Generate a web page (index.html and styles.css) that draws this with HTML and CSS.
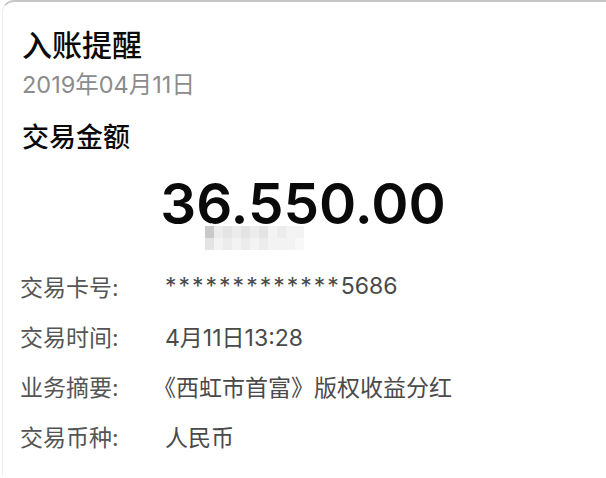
FILE: index.html
```html
<!DOCTYPE html>
<html lang="zh-CN">
<head>
<meta charset="utf-8">
<title>入账提醒</title>
<link rel="stylesheet" href="styles.css">
</head>
<body>
<div class="card">
  <div class="head">
    <div class="title">入账提醒</div>
    <div class="date">2019年04月11日</div>
    <div class="sub">交易金额</div>
  </div>
  <div class="amount-wrap">
    <div class="amount">36.550.00</div>
    <div class="mosaic">
      <span class="m1"></span><span class="m3"></span><span class="m2"></span><span class="m3"></span><span class="m2"></span><span class="m3"></span><span class="m2"></span><span class="m4"></span><span class="m3"></span><span class="m4"></span><span class="m4"></span>
      <span class="m2"></span><span class="m4"></span><span class="m3"></span><span class="m4"></span><span class="m3"></span><span class="m4"></span><span class="m3"></span><span class="m4"></span><span class="m4"></span><span class="m4"></span><span class="m5"></span>
    </div>
  </div>
  <div class="rows">
    <div class="row"><span class="label">交易卡号:</span><span class="value"><span class="stars">*************</span>5686</span></div>
    <div class="row"><span class="label">交易时间:</span><span class="value">4月11日13:28</span></div>
    <div class="row"><span class="label">业务摘要:</span><span class="value quote">《西虹市首富》版权收益分红</span></div>
    <div class="row"><span class="label">交易币种:</span><span class="value">人民币</span></div>
  </div>
</div>
</body>
</html>
```

FILE: styles.css
```css
html, body {
  margin: 0;
  padding: 0;
  background: #ffffff;
}
body {
  width: 606px;
  height: 478px;
  overflow: hidden;
  font-family: "Inter", "Noto Sans CJK SC", sans-serif;
}
.card {
  margin-left: 2px;
  height: 476px;
  border-top: 2px solid #c6c6c6;
  border-left: 1px solid #ededed;
  border-top-left-radius: 12px;
  box-sizing: border-box;
}
.head {
  padding: 24px 0 0 19px;
}
.title {
  font-size: 30px;
  line-height: 34px;
  font-weight: 500;
  color: #0a0a0a;
  font-family: "Noto Sans CJK SC", sans-serif;
}
.date {
  margin-top: 10px;
  font-size: 23.5px;
  line-height: 30px;
  color: #8c8c8c;
}
.sub {
  margin-top: 20px;
  font-size: 27px;
  line-height: 32px;
  font-weight: 500;
  color: #0a0a0a;
  font-family: "Noto Sans CJK SC", sans-serif;
}
.amount-wrap {
  position: relative;
  margin-left: -3px;
  margin-top: 22px;
}
.amount {
  text-align: center;
  font-size: 56.5px;
  line-height: 60px;
  font-weight: 600;
  color: #0a0a0a;
}
.mosaic {
  position: absolute;
  left: 205px;
  top: 52px;
  width: 99px;
  height: 24px;
  display: grid;
  grid-template-columns: repeat(11, 9px);
  grid-template-rows: 12px 12px;
}
.m1 { background: #c9c9c9; }
.m2 { background: #e4e4e4; }
.m3 { background: #ececec; }
.m4 { background: #f3f3f3; }
.m5 { background: #f8f8f8; }
.rows {
  margin-top: 27px;
  padding-left: 17px;
}
.row {
  display: flex;
  align-items: center;
  height: 50px;
  font-size: 23px;
  color: #555555;
}
.label {
  width: 145px;
  flex: none;
}
.value {
  color: #4a4a4a;
}
.stars {
  letter-spacing: 2px;
}
.quote {
  margin-left: -12px;
}
```
